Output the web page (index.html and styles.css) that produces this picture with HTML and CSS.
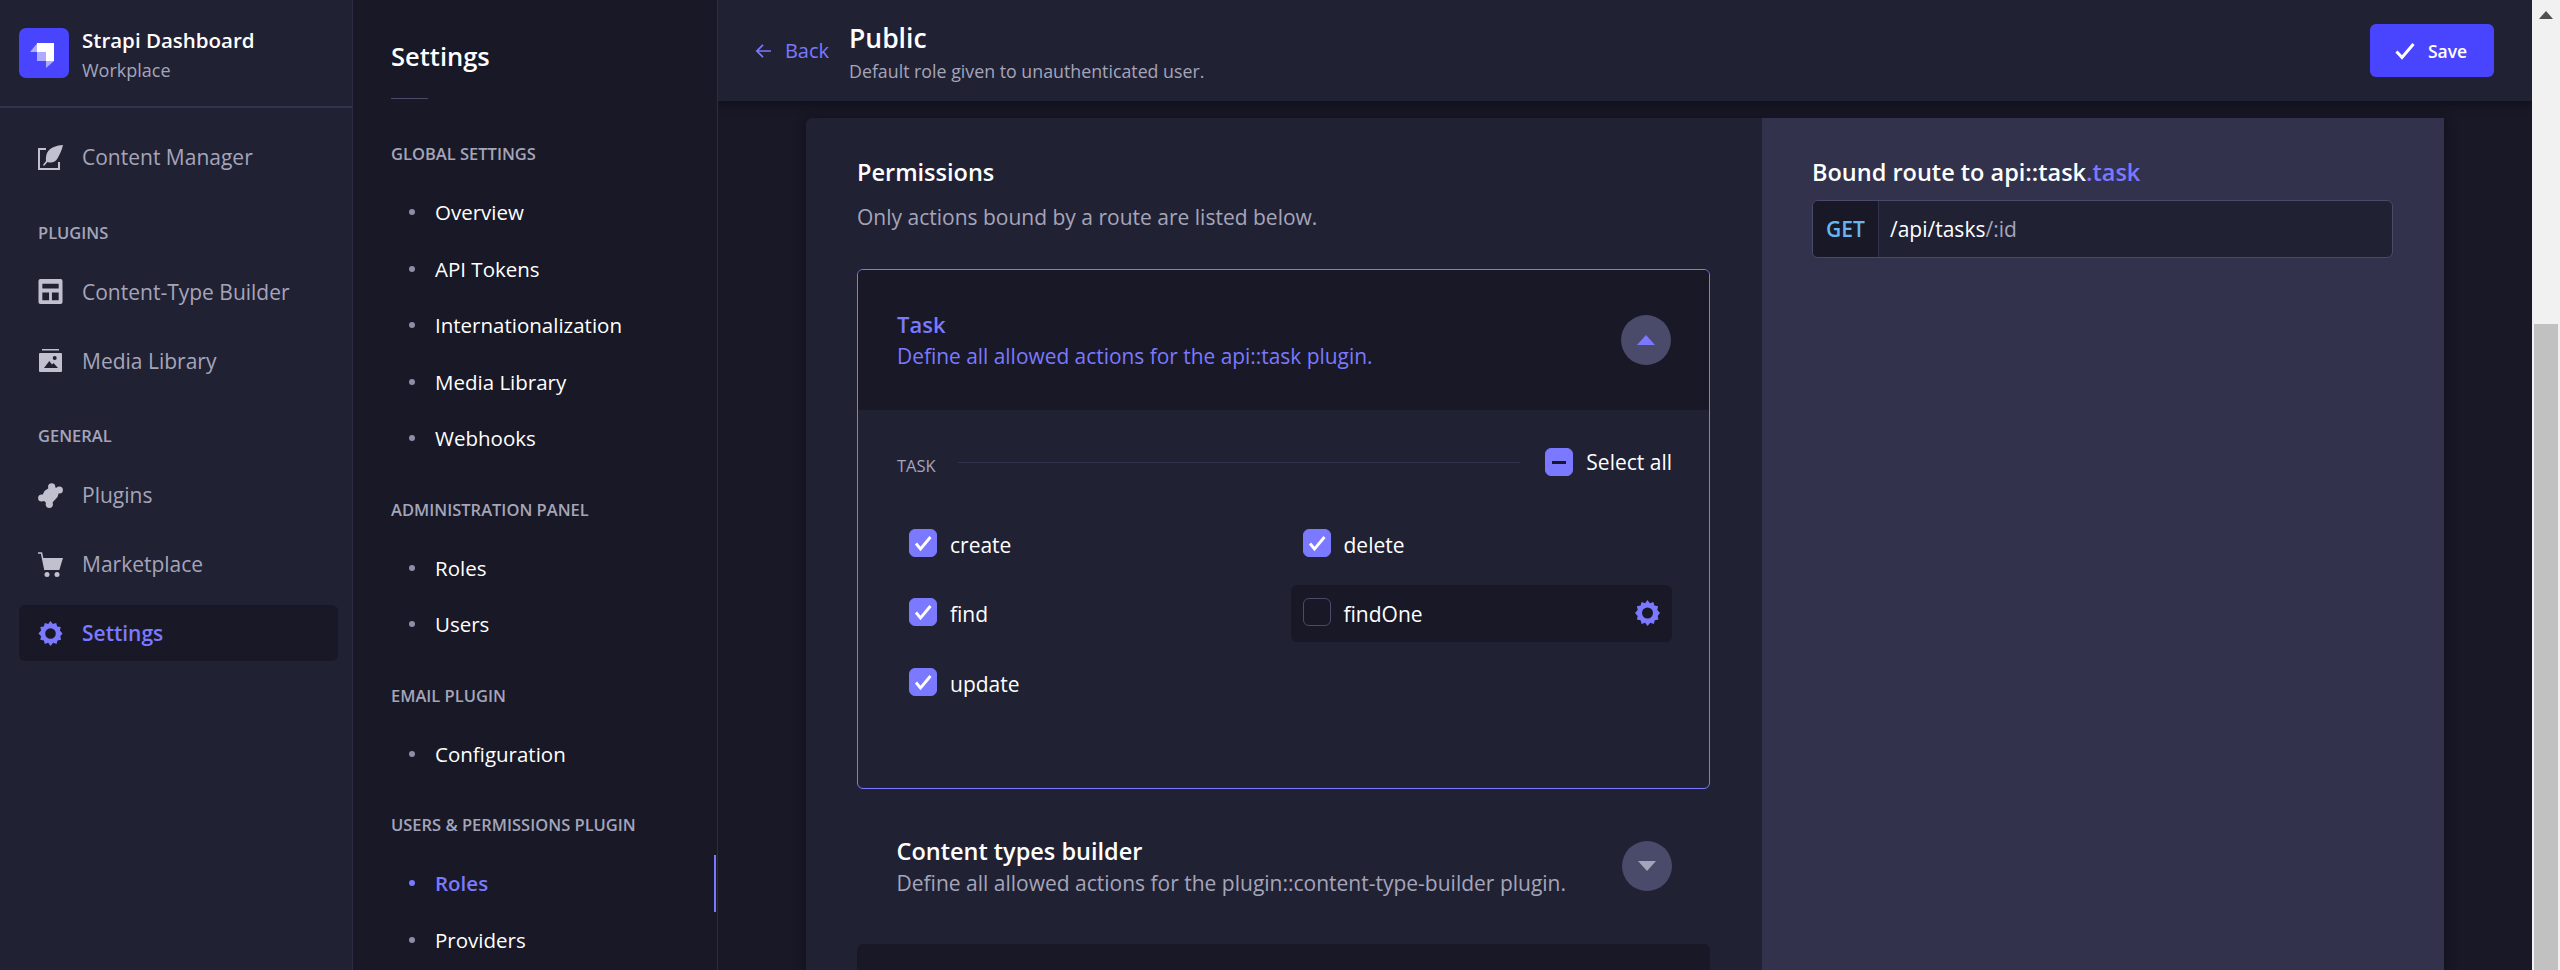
FILE: index.html
```html
<!DOCTYPE html>
<html lang="en">
<head>
<meta charset="UTF-8">
<title>Strapi Dashboard</title>
<link rel="stylesheet" href="styles.css">
</head>
<body>
<svg class="defs" width="0" height="0">
    <symbol id="gear" viewBox="0 0 25 26">
        <path fill-rule="evenodd" d="M12.500 0l2.400 3.200 3.500-1.200 1 3.600 3.700.7-.8 3.700L25 13l-2.300 2.900.8 3.700-3.700.7-1 3.600-3.500-1.200L12.500 26l-2.400-3.300-3.500 1.200-1-3.600-3.700-.7.8-3.700L0 13l2.700-3-.8-3.700 3.700-.7 1-3.600 3.500 1.200zM12.500 7.500a5.500 5.500 0 1 0 0 11 5.500 5.500 0 0 0 0-11z"/>
    </symbol>
    <symbol id="check" viewBox="1 1 26 26">
        <path d="M7 14.500l4.500 5.500L21.500 8" fill="none" stroke="#fff" stroke-width="2.800"/>
    </symbol>
</svg>

<div class="app">
    <nav class="sidebar">
        <div class="brand">
            <svg class="logo" viewBox="0 0 50 50">
                <rect width="50" height="50" rx="7" fill="#4945ff"/>
                <path d="M18 15H35V33H27V24H18Z" fill="#fff"/>
                <path d="M18 24H27V33H18ZM18 15.500V24H11ZM27 33H35L27 40Z" fill="#fff" opacity=".55"/>
            </svg>
            <div>
                <div class="brand-name">Strapi Dashboard</div>
                <div class="brand-sub">Workplace</div>
            </div>
        </div>

        <div class="side-links">
            <a class="side-link">
                <svg class="side-icon" viewBox="0 0 25 25">
                    <path d="M8 4H1V24H21V17" fill="none" stroke="#c0c0cf" stroke-width="2"/>
                    <path d="M25 0C19 .5 12 2 9 8 7.500 12 8 14 8 16L5 20l1 1 3.500-4c4 1.500 8 0 10-3.500C21.500 10 24 5 25 0Z" fill="#c0c0cf"/>
                </svg>
                Content Manager
            </a>

            <div class="side-label">Plugins</div>
            <a class="side-link">
                <svg class="side-icon" viewBox="0 0 25 26">
                    <path fill-rule="evenodd" fill="#c0c0cf" d="M2 0H23a2 2 0 0 1 2 2V24a2 2 0 0 1-2 2H2a2 2 0 0 1-2-2V2A2 2 0 0 1 2 0ZM4 5V10H21V5ZM4 14V22H11V14ZM14 14V22H21V14Z"/>
                </svg>
                Content-Type Builder
            </a>
            <a class="side-link">
                <svg class="side-icon" viewBox="0 0 25 25">
                    <path fill="#c0c0cf" d="M4 1H21V2.500H4Z"/>
                    <path fill-rule="evenodd" fill="#c0c0cf" d="M2 5H23a1 1 0 0 1 1 1V23a1 1 0 0 1-1 1H2a1 1 0 0 1-1-1V6A1 1 0 0 1 2 5ZM16.700 8a2 2 0 1 0 0 4 2 2 0 0 0 0-4ZM6 20H20L15.500 15 14 16.500 11.300 13Z"/>
                </svg>
                Media Library
            </a>

            <div class="side-label">General</div>
            <a class="side-link">
                <svg class="side-icon" viewBox="0 0 25 25">
                    <g fill="#c0c0cf">
                        <circle cx="13.700" cy="3.800" r="3.600"/>
                        <circle cx="21.300" cy="7" r="3.600"/>
                        <circle cx="3.700" cy="15" r="3.600"/>
                        <circle cx="11.300" cy="21.300" r="3.600"/>
                        <path d="M13.700 3 22 6.300 19.500 14 11.300 23 3 15 6.500 8Z"/>
                    </g>
                </svg>
                Plugins
            </a>
            <a class="side-link">
                <svg class="side-icon" viewBox="0 0 25 25">
                    <path d="M0 1H3.500L7 18" fill="none" stroke="#c0c0cf" stroke-width="1.500"/>
                    <path fill="#c0c0cf" d="M4.700 6H25L21.300 18H7Z"/>
                    <circle cx="9" cy="22.500" r="2.500" fill="#c0c0cf"/>
                    <circle cx="19" cy="22.500" r="2.500" fill="#c0c0cf"/>
                </svg>
                Marketplace
            </a>
            <a class="side-link side-link-active">
                <svg class="side-icon gear"><use href="#gear"/></svg>
                Settings
            </a>
        </div>
    </nav>

    <aside class="subnav">
        <h2 class="subnav-title">Settings</h2>
        <div class="subnav-rule"></div>

        <div class="sub-section sub-section-first">
            <div class="sub-label">Global Settings</div>
            <a class="sub-link">Overview</a>
            <a class="sub-link">API Tokens</a>
            <a class="sub-link">Internationalization</a>
            <a class="sub-link">Media Library</a>
            <a class="sub-link">Webhooks</a>
        </div>
        <div class="sub-section">
            <div class="sub-label">Administration Panel</div>
            <a class="sub-link">Roles</a>
            <a class="sub-link">Users</a>
        </div>
        <div class="sub-section">
            <div class="sub-label">Email Plugin</div>
            <a class="sub-link">Configuration</a>
        </div>
        <div class="sub-section">
            <div class="sub-label">Users &amp; Permissions Plugin</div>
            <a class="sub-link sub-link-active">Roles</a>
            <a class="sub-link">Providers</a>
        </div>
    </aside>

    <main class="main">
        <header class="topbar">
            <a class="back">
                <svg class="back-arrow" viewBox="0 0 18 18">
                    <path d="M17 9H2M8.500 2.500 2 9l6.500 6.500" fill="none" stroke="#7b79ff" stroke-width="1.800"/>
                </svg>
                Back
            </a>
            <div class="topbar-titles">
                <h1 class="page-title">Public</h1>
                <div class="page-sub">Default role given to unauthenticated user.</div>
            </div>
            <button class="save">
                <svg class="save-check" viewBox="0 0 20 20">
                    <path d="M1.500 10.500 7 16.500 18.500 3" fill="none" stroke="#fff" stroke-width="3"/>
                </svg>
                Save
            </button>
        </header>

        <div class="content">
            <div class="panel">
                <section class="permissions">
                    <h3 class="panel-title">Permissions</h3>
                    <p class="panel-sub">Only actions bound by a route are listed below.</p>

                    <div class="accordion">
                        <div class="acc-head acc-head-open">
                            <div>
                                <div class="acc-title">Task</div>
                                <div class="acc-sub">Define all allowed actions for the api::task plugin.</div>
                            </div>
                            <span class="acc-toggle"><span class="tri-up"></span></span>
                        </div>
                        <div class="acc-body">
                            <div class="task-row">
                                <span class="task-label">TASK</span>
                                <span class="task-line"></span>
                                <span class="box box-on box-minus"><span class="minus"></span></span>
                                <span class="select-all">Select all</span>
                            </div>
                            <div class="actions">
                                <div class="action"><span class="box box-on"><svg class="tick"><use href="#check"/></svg></span>create</div>
                                <div class="action"><span class="box box-on"><svg class="tick"><use href="#check"/></svg></span>delete</div>
                                <div class="action"><span class="box box-on"><svg class="tick"><use href="#check"/></svg></span>find</div>
                                <div class="action action-active">
                                    <span class="box"></span>findOne
                                    <svg class="action-gear"><use href="#gear"/></svg>
                                </div>
                                <div class="action"><span class="box box-on"><svg class="tick"><use href="#check"/></svg></span>update</div>
                            </div>
                        </div>
                    </div>

                    <div class="acc-head acc-plain">
                        <div>
                            <div class="acc-title">Content types builder</div>
                            <div class="acc-sub">Define all allowed actions for the plugin::content-type-builder plugin.</div>
                        </div>
                        <span class="acc-toggle"><span class="tri-down"></span></span>
                    </div>
                    <div class="acc-dark"></div>
                </section>

                <section class="route">
                    <h3 class="panel-title">Bound route to api::task<span class="accent">.task</span></h3>
                    <div class="route-box">
                        <span class="route-method">GET</span>
                        <span class="route-path">/api/tasks<span class="route-param">/:id</span></span>
                    </div>
                </section>
            </div>
        </div>
    </main>

    <div class="scrollbar">
        <span class="scroll-up"></span>
        <span class="scroll-thumb"></span>
    </div>
</div>
</body>
</html>
```

FILE: styles.css
```css
* {
    box-sizing: border-box;
}

html, body {
    margin: 0;
    padding: 0;
    height: 970px;
    overflow: hidden;
}

body {
    font-family: "Open Sans", "Noto Sans", sans-serif;
    font-size: 21px;
    background-color: #181826;
    color: #fff;
}

h1, h2, h3, p {
    margin: 0;
    font-weight: 600;
}

.defs {
    position: absolute;
}

.app {
    display: flex;
    height: 970px;
    overflow: hidden;
}

/* left nav */
.sidebar {
    width: 353px;
    flex-shrink: 0;
    background-color: #212134;
    border-right: 1px solid #2c2c44;
}

.brand {
    display: flex;
    align-items: center;
    gap: 13px;
    height: 108px;
    padding: 0 19px;
    border-bottom: 2px solid #32324d;
}

.logo {
    width: 50px;
    height: 50px;
    flex-shrink: 0;
}

.brand-name {
    font-size: 20.500px;
    font-weight: 600;
    line-height: 28px;
    margin-top: 1px;
}

.brand-sub {
    font-size: 18px;
    line-height: 24px;
    margin-top: 4px;
    color: #a5a5ba;
}

.side-links {
    padding: 21px 14px 0 19px;
}

.side-link {
    display: flex;
    align-items: center;
    gap: 19px;
    height: 56px;
    margin-bottom: 13px;
    padding-left: 19px;
    border-radius: 6px;
    color: #a5a5ba;
}

.side-icon {
    width: 25px;
    height: 25px;
    flex-shrink: 0;
}

.side-link-active {
    background-color: #181826;
    color: #7b79ff;
    font-weight: 600;
}

.gear {
    fill: #7b79ff;
}

.side-label {
    height: 22px;
    line-height: 22px;
    margin: 36.500px 0 20px 19px;
    font-size: 16.500px;
    font-weight: 600;
    text-transform: uppercase;
    color: #a5a5ba;
}

/* settings nav */
.subnav {
    width: 365px;
    flex-shrink: 0;
    padding-left: 38px;
    background-color: #181826;
    border-right: 1px solid #2c2c44;
}

.subnav-title {
    font-size: 25.500px;
    line-height: 36px;
    padding-top: 38px;
    height: 76px;
    font-weight: 600;
}

.subnav-rule {
    width: 37px;
    height: 1px;
    margin-top: 22px;
    background-color: #4a4a6a;
}

.sub-section {
    margin-top: 32px;
}

.sub-section-first {
    margin-top: 44px;
}

.sub-label {
    height: 22px;
    line-height: 22px;
    margin-bottom: 19px;
    font-size: 16.500px;
    font-weight: 600;
    text-transform: uppercase;
    color: #a5a5ba;
}

.sub-link {
    display: flex;
    align-items: center;
    gap: 20px;
    height: 56.500px;
    padding-left: 18px;
    font-size: 20.500px;
}

.sub-link::before {
    content: "";
    width: 6px;
    height: 6px;
    border-radius: 50%;
    background-color: #8e8ea9;
}

.sub-link-active {
    color: #7b79ff;
    font-weight: 600;
    position: relative;
}

.sub-link-active::before {
    background-color: #7b79ff;
}

.sub-link-active::after {
    content: "";
    position: absolute;
    top: 0;
    right: 1px;
    width: 2px;
    height: 57px;
    background-color: #7b79ff;
}

/* main column */
.main {
    flex: 1;
    min-width: 0;
    display: flex;
    flex-direction: column;
    overflow: hidden;
}

.topbar {
    display: flex;
    align-items: center;
    height: 101px;
    flex-shrink: 0;
    padding: 0 38px 0 37px;
    background-color: #212134;
    box-shadow: 0 4px 7px rgba(10, 10, 20, 0.5);
    position: relative;
}

.back {
    display: flex;
    align-items: center;
    gap: 13px;
    width: 74px;
    flex-shrink: 0;
    font-size: 20px;
    color: #7b79ff;
}

.back-arrow {
    width: 18px;
    height: 18px;
}

.topbar-titles {
    margin-left: 20px;
    flex: 1;
}

.page-title {
    font-size: 26.500px;
    line-height: 34px;
    margin-top: 3px;
}

.page-sub {
    font-size: 17.800px;
    line-height: 24px;
    margin-top: 4px;
    color: #a5a5ba;
}

.save {
    display: flex;
    align-items: center;
    gap: 13px;
    height: 53px;
    width: 124px;
    padding: 0 0 0 25px;
    border: none;
    border-radius: 6px;
    background-color: #4945ff;
    color: #fff;
    font-family: inherit;
    font-size: 17.500px;
    font-weight: 600;
}

.save-check {
    width: 20px;
    height: 20px;
}

.content {
    flex: 1;
    min-height: 0;
    padding: 17px 88px 0;
}

.panel {
    display: flex;
    height: 100%;
    background-color: #212134;
    border-radius: 6px 0 0 0;
    box-shadow: 0 2px 12px rgba(10, 10, 20, 0.6);
    overflow: hidden;
}

.permissions {
    width: 956px;
    flex-shrink: 0;
    padding: 39px 52px 0 51px;
}

.panel-title {
    font-size: 23.500px;
    line-height: 30px;
    font-weight: 600;
}

.panel-sub {
    margin-top: 15.500px;
    line-height: 28px;
    font-weight: 400;
    color: #a5a5ba;
}

.accordion {
    margin-top: 38.500px;
    height: 520px;
    border: 1px solid #7b79ff;
    border-radius: 6px;
    overflow: hidden;
}

.acc-head {
    display: flex;
    align-items: center;
    justify-content: space-between;
    height: 140px;
    padding: 0 38px 0 39px;
}

.acc-head-open {
    background-color: #181826;
    color: #7b79ff;
}

.acc-plain {
    margin-top: 7px;
    padding-left: 39.500px;
    padding-right: 38px;
}

.acc-dark {
    height: 28px;
    margin-top: 8px;
    background-color: #181826;
    border-radius: 6px 6px 0 0;
}

.acc-title {
    font-size: 23.500px;
    font-weight: 600;
    line-height: 30px;
}

.acc-sub {
    margin-top: 3px;
    line-height: 28px;
    color: #a5a5ba;
}

.acc-head-open .acc-title {
    font-size: 22px;
    margin-top: -1px;
}

.acc-head-open .acc-sub {
    font-size: 20.900px;
    color: #7b79ff;
}

.acc-toggle {
    display: flex;
    align-items: center;
    justify-content: center;
    width: 50px;
    height: 50px;
    border-radius: 50%;
    background-color: #4a4a6a;
}

.tri-up, .tri-down {
    width: 0;
    height: 0;
    border-left: 9px solid transparent;
    border-right: 9px solid transparent;
}

.tri-up {
    border-bottom: 10px solid #7b79ff;
}

.tri-down {
    border-top: 10px solid #a5a5ba;
}

.acc-body {
    padding: 38px 37px 0 39px;
}

.task-row {
    display: flex;
    align-items: center;
    height: 28px;
}

.task-label {
    font-size: 16.500px;
    color: #a5a5ba;
    margin-top: 6px;
}

.task-line {
    flex: 1;
    height: 1px;
    margin: 0 25px 0 22px;
    background-color: #32324d;
}

.select-all {
    margin-left: 13px;
}

.box {
    display: flex;
    width: 28px;
    height: 28px;
    flex-shrink: 0;
    border: 1px solid #4a4a6a;
    border-radius: 6px;
}

.box-on {
    background-color: #7b79ff;
    border-color: #7b79ff;
}

.box-minus {
    align-items: center;
    justify-content: center;
}

.minus {
    width: 14px;
    height: 3px;
    background-color: #181826;
}

.tick {
    width: 26px;
    height: 26px;
}

.actions {
    display: grid;
    grid-template-columns: 1fr 1fr;
    gap: 12.500px 12px;
    margin-top: 39px;
}

.action {
    display: flex;
    align-items: center;
    gap: 13px;
    height: 57px;
    padding: 2px 12px 0;
    border-radius: 6px;
}

.action .box {
    margin-bottom: 4px;
}

.action-active {
    background-color: #181826;
}

.action-gear {
    width: 25px;
    height: 26px;
    margin-left: auto;
    margin-bottom: 2px;
    fill: #7b79ff;
}

/* route column */
.route {
    flex: 1;
    padding: 39px 51px 0 50px;
    background-color: #32324d;
}

.accent {
    color: #7b79ff;
}

.route-box {
    display: flex;
    height: 58px;
    margin-top: 13px;
    background-color: #212134;
    border: 1px solid #4a4a6a;
    border-radius: 6px;
    overflow: hidden;
}

.route-method {
    display: flex;
    align-items: center;
    justify-content: center;
    width: 66px;
    background-color: #181826;
    border-right: 1px solid #32324d;
    color: #66b7f1;
    font-weight: 600;
}

.route-path {
    display: flex;
    align-items: center;
    padding-left: 11px;
}

.route-param {
    color: #a5a5ba;
}

.scrollbar {
    width: 28px;
    flex-shrink: 0;
    display: flex;
    flex-direction: column;
    align-items: center;
    background-color: #f1f1f1;
}

.scroll-up {
    width: 0;
    height: 0;
    margin-top: 11px;
    border-left: 7px solid transparent;
    border-right: 7px solid transparent;
    border-bottom: 8px solid #505050;
}

.scroll-thumb {
    width: 24px;
    height: 646px;
    margin-top: 305px;
    background-color: #c1c1c1;
}
```
